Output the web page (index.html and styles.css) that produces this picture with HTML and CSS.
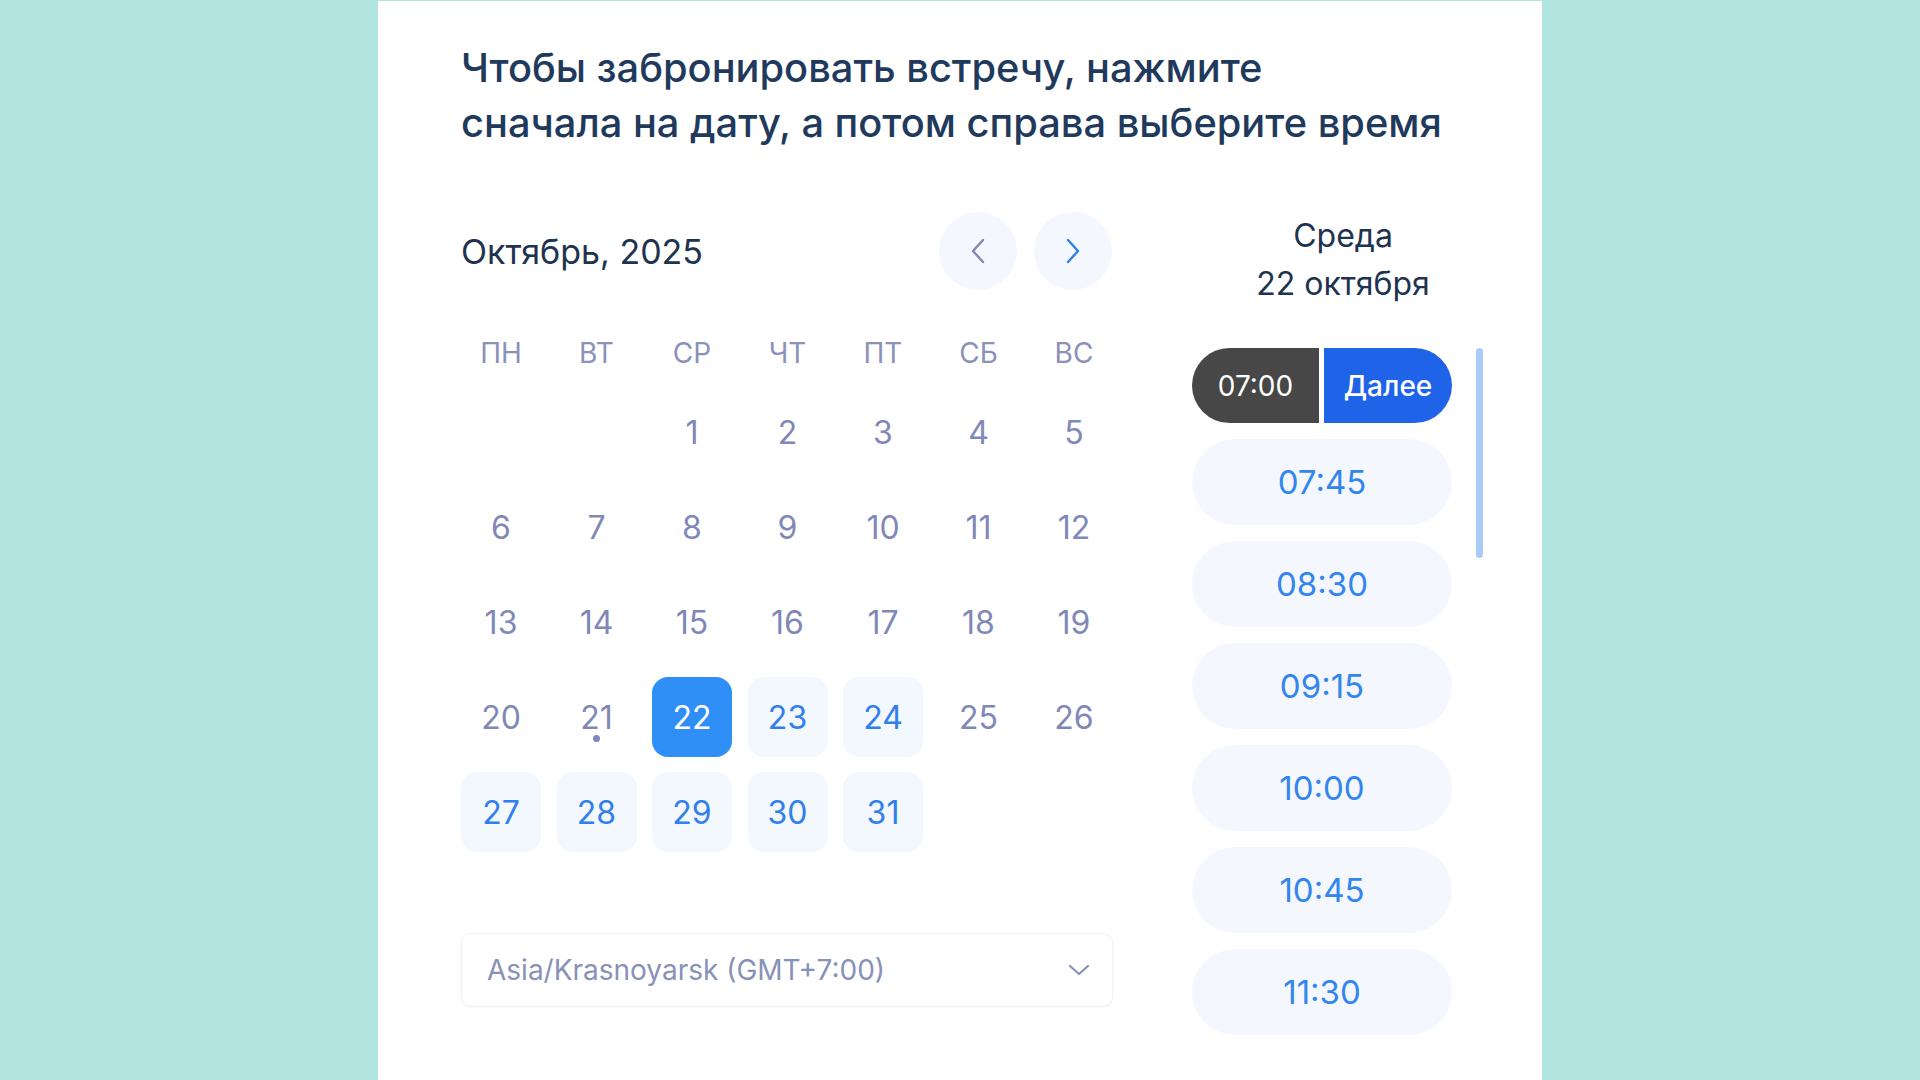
FILE: index.html
```html
<!DOCTYPE html>
<html lang="ru">
<head>
<meta charset="utf-8">
<title>Бронирование встречи</title>
<link rel="stylesheet" href="styles.css">
</head>
<body>
<div class="card">
  <h1 class="title">Чтобы забронировать встречу, нажмите<br>сначала на дату, а потом справа выберите время</h1>
  <div class="main">
    <div class="calendar">
      <div class="cal-head">
        <div class="month">Октябрь, 2025</div>
        <div class="nav">
          <button class="nav-btn prev" aria-label="Назад">
            <svg width="16" height="26" viewBox="0 0 16 26"><path d="M13 2 L3 13 L13 24" fill="none" stroke="currentColor" stroke-width="2.4" stroke-linecap="round" stroke-linejoin="round"/></svg>
          </button>
          <button class="nav-btn next-m" aria-label="Вперёд">
            <svg width="16" height="26" viewBox="0 0 16 26"><path d="M3 2 L13 13 L3 24" fill="none" stroke="currentColor" stroke-width="2.4" stroke-linecap="round" stroke-linejoin="round"/></svg>
          </button>
        </div>
      </div>
      <div class="grid">
        <div class="wd">ПН</div><div class="wd">ВТ</div><div class="wd">СР</div><div class="wd">ЧТ</div><div class="wd">ПТ</div><div class="wd">СБ</div><div class="wd">ВС</div>
        <div class="day empty"></div><div class="day empty"></div>
        <div class="day">1</div><div class="day">2</div><div class="day">3</div><div class="day">4</div><div class="day">5</div>
        <div class="day">6</div><div class="day">7</div><div class="day">8</div><div class="day">9</div><div class="day">10</div><div class="day">11</div><div class="day">12</div>
        <div class="day">13</div><div class="day">14</div><div class="day">15</div><div class="day">16</div><div class="day">17</div><div class="day">18</div><div class="day">19</div>
        <div class="day">20</div><div class="day today">21</div><div class="day sel">22</div><div class="day avail">23</div><div class="day avail">24</div><div class="day">25</div><div class="day">26</div>
        <div class="day avail">27</div><div class="day avail">28</div><div class="day avail">29</div><div class="day avail">30</div><div class="day avail">31</div>
      </div>
      <div class="tz">
        <span class="tz-text">Asia/Krasnoyarsk (GMT+7:00)</span>
        <svg class="tz-chev" width="22" height="12" viewBox="0 0 22 12"><path d="M2 2 L11 10 L20 2" fill="none" stroke="currentColor" stroke-width="2.2" stroke-linecap="round" stroke-linejoin="round"/></svg>
      </div>
    </div>
    <div class="times">
      <div class="day-title">Среда<br>22 октября</div>
      <div class="slot-area">
        <div class="slots">
          <div class="picked-row">
            <div class="picked">07:00</div>
            <div class="go">Далее</div>
          </div>
          <div class="slot">07:45</div>
          <div class="slot">08:30</div>
          <div class="slot">09:15</div>
          <div class="slot">10:00</div>
          <div class="slot">10:45</div>
          <div class="slot">11:30</div>
        </div>
        <div class="track"><div class="thumb"></div></div>
      </div>
    </div>
  </div>
</div>
</body>
</html>
```
FILE: styles.css
```css
* { box-sizing: border-box; }
html, body { margin: 0; padding: 0; }
body {
  background: #b3e5e0;
  font-family: Inter, "Noto Sans", "DejaVu Sans", sans-serif;
  overflow: hidden;
  height: 1080px;
}
.card {
  width: 1164px;
  margin: 1px auto 0;
  min-height: 1100px;
  background: #ffffff;
  padding: 39px 0 0 83px;
}
.title {
  margin: 0;
  font-size: 39.8px;
  font-weight: 500;
  line-height: 55px;
  color: #1f3a5c;
  letter-spacing: 0;
}
.main {
  display: flex;
  gap: 79px;
  margin-top: 62px;
}
.calendar {
  width: 652px;
  display: flex;
  flex-direction: column;
}
.cal-head {
  display: flex;
  align-items: center;
  justify-content: space-between;
  height: 78px;
}
.month {
  font-size: 34px;
  color: #1e3350;
}
.nav {
  display: flex;
  gap: 17px;
  margin-right: 1px;
}
.nav-btn {
  width: 78px;
  height: 78px;
  border-radius: 50%;
  border: none;
  background: #f4f7fd;
  display: flex;
  align-items: center;
  justify-content: center;
  padding: 0;
}
.nav-btn.prev { color: #8a82b2; }
.nav-btn.next-m { color: #2f80ed; }
.grid {
  display: grid;
  grid-template-columns: repeat(7, 80px);
  grid-template-rows: 49px repeat(5, 80px);
  column-gap: 15.5px;
  row-gap: 15px;
  margin-top: 38px;
}
.wd {
  display: flex;
  align-items: center;
  justify-content: center;
  font-size: 28px;
  color: #8a91ba;
}
.day {
  position: relative;
  display: flex;
  align-items: center;
  justify-content: center;
  border-radius: 16px;
  font-size: 32px;
  color: #8088b8;
}
.day.avail {
  background: #f3f7fe;
  color: #2f80ed;
}
.day.sel {
  background: #2f8ff7;
  color: #ffffff;
}
.day.today::after {
  content: "";
  position: absolute;
  left: 50%;
  bottom: 15px;
  width: 7px;
  height: 7px;
  margin-left: -3.5px;
  border-radius: 50%;
  background: #8088b8;
}
.tz {
  margin-top: 81px;
  height: 74px;
  border: 1px solid #f0f1f5;
  border-radius: 10px;
  box-shadow: 0 1px 3px rgba(30, 50, 90, 0.04);
  display: flex;
  align-items: center;
  justify-content: space-between;
  padding: 0 22px 0 25px;
}
.tz-text {
  font-size: 28px;
  color: #8891b8;
}
.tz-chev { color: #8891b8; }
.times {
  width: 302px;
  display: flex;
  flex-direction: column;
}
.day-title {
  text-align: center;
  font-size: 32px;
  line-height: 48px;
  color: #1e3350;
}
.slot-area {
  display: flex;
  gap: 24px;
  margin-top: 40px;
}
.slots {
  width: 260px;
  display: flex;
  flex-direction: column;
  gap: 16px;
}
.picked-row {
  display: flex;
  gap: 5px;
  height: 75px;
}
.picked {
  width: 127px;
  background: #474747;
  color: #ffffff;
  border-radius: 38px 0 0 38px;
  display: flex;
  align-items: center;
  justify-content: center;
  font-size: 28px;
}
.go {
  width: 128px;
  background: #1f63e8;
  color: #ffffff;
  border-radius: 0 38px 38px 0;
  display: flex;
  align-items: center;
  justify-content: center;
  font-size: 28px;
  font-weight: 500;
}
.slot {
  height: 86px;
  border-radius: 43px;
  background: #f4f8fe;
  color: #3385ef;
  font-size: 33px;
  display: flex;
  align-items: center;
  justify-content: center;
}
.track {
  width: 7px;
}
.thumb {
  width: 7px;
  height: 210px;
  border-radius: 4px;
  background: #a9cdf8;
}
```
